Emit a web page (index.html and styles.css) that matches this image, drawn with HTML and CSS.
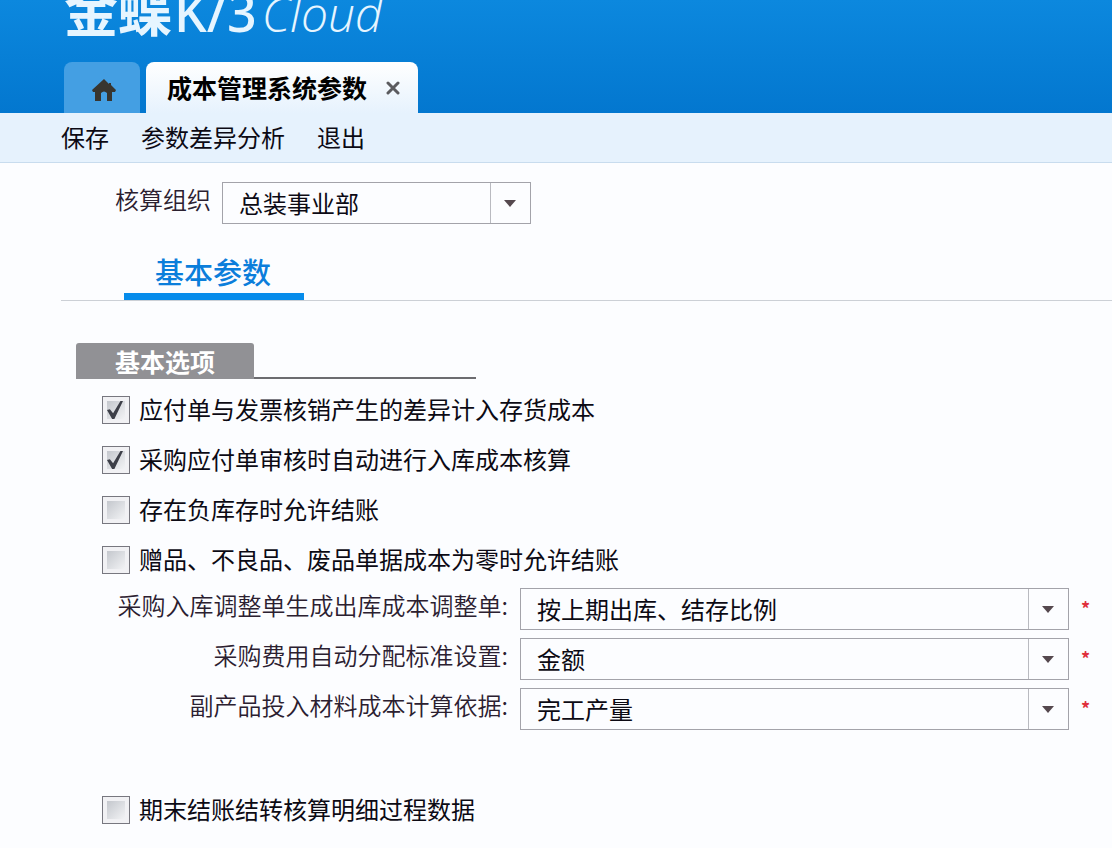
FILE: index.html
```html
<!DOCTYPE html>
<html lang="zh-CN">

<head>
  <meta charset="utf-8">
  <title>成本管理系统参数</title>
  <link rel="stylesheet" href="styles.css">
</head>

<body>
  <header class="header">
    <div class="logo">
      <span class="logo-cn">金蝶</span>
      <span class="logo-k3">K/3</span>
      <span class="logo-cloud">Cloud</span>
    </div>
    <nav class="tabs">
      <a class="tab-home" href="#" aria-label="首页">
        <svg width="24" height="24" viewBox="0 0 24 24">
          <path d="M12 1 L0 12 L1 14 H3 V23 H9 V15 Q12 12 15 15 V23 H20 V14 H23 L24 12 L19 7 V5 H17 V6 Z" fill="#38352f"/>
        </svg>
      </a>
      <div class="tab-active">
        <span>成本管理系统参数</span>
        <button class="close" type="button" aria-label="关闭">
          <svg width="14" height="14" viewBox="0 0 14 14">
            <path d="M2 2 L12 12 M12 2 L2 12" stroke="#5b5b5f" stroke-width="3" stroke-linecap="round"/>
          </svg>
        </button>
      </div>
    </nav>
  </header>

  <div class="toolbar">
    <button type="button">保存</button>
    <button type="button">参数差异分析</button>
    <button type="button">退出</button>
  </div>

  <main>
    <div class="org">
      <label for="org">核算组织</label>
      <div class="select">
        <select id="org">
          <option>总装事业部</option>
        </select>
      </div>
    </div>

    <div class="subtabs">
      <a class="subtab" href="#">基本参数</a>
    </div>

    <!-- Basic options -->
    <div class="section">
      <h2>基本选项</h2>
    </div>

    <form class="options">
      <label class="check"><input type="checkbox" checked><span>应付单与发票核销产生的差异计入存货成本</span></label>
      <label class="check"><input type="checkbox" checked><span>采购应付单审核时自动进行入库成本核算</span></label>
      <label class="check"><input type="checkbox"><span>存在负库存时允许结账</span></label>
      <label class="check"><input type="checkbox"><span>赠品、不良品、废品单据成本为零时允许结账</span></label>

      <div class="field">
        <label for="adjust">采购入库调整单生成出库成本调整单:</label>
        <div class="select">
          <select id="adjust">
            <option>按上期出库、结存比例</option>
          </select>
        </div>
        <span class="required">*</span>
      </div>
      <div class="field">
        <label for="expense">采购费用自动分配标准设置:</label>
        <div class="select">
          <select id="expense">
            <option>金额</option>
          </select>
        </div>
        <span class="required">*</span>
      </div>
      <div class="field">
        <label for="byproduct">副产品投入材料成本计算依据:</label>
        <div class="select">
          <select id="byproduct">
            <option>完工产量</option>
          </select>
        </div>
        <span class="required">*</span>
      </div>

      <label class="check check-last"><input type="checkbox"><span>期末结账结转核算明细过程数据</span></label>
    </form>
  </main>
</body>

</html>
```
FILE: styles.css
```css
* {
  box-sizing: border-box;
}

body {
  margin: 0;
  background-color: #fcfdff;
  color: #0c0a14;
  font-family: "Noto Sans CJK SC", sans-serif;
  font-size: 24px;
  line-height: 34px;
}

button, select {
  font: inherit;
  color: inherit;
  border: 0;
  background: none;
}

.header {
  display: flex;
  flex-direction: column;
  justify-content: flex-end;
  height: 113px;
  overflow: hidden;
  padding-left: 64px;
  background: linear-gradient(#0c88de, #0377cf);
}

/* Logo */
.logo {
  display: flex;
  align-items: baseline;
  margin-bottom: 16px;
  color: #e6f5ff;
  font-size: 48px;
  line-height: 64px;
}

.logo-cn {
  font-size: 54px;
  font-weight: 700;
}

.logo-k3 {
  margin-left: 2px;
  font-family: "Noto Sans", sans-serif;
  font-size: 52px;
  font-weight: 500;
}

.logo-cloud {
  margin-left: 5px;
  font-family: "Open Sans", sans-serif;
  font-style: italic;
  font-weight: 300;
}

/* Page tabs */
.tabs {
  display: flex;
  gap: 6px;
}

.tab-home {
  display: flex;
  align-items: center;
  justify-content: center;
  width: 76px;
  height: 51px;
  padding: 4px 0 0 4px;
  border-radius: 8px 8px 0 0;
  background-color: #449fe3;
}

.tab-active {
  display: flex;
  align-items: center;
  gap: 17px;
  height: 51px;
  padding: 0 16px 0 21px;
  border-radius: 8px 8px 0 0;
  background: linear-gradient(#fff, #e6f2fd);
  color: #000;
  font-size: 25px;
  font-weight: 700;
}

.tab-active span {
  padding-bottom: 2px;
}

.close {
  display: flex;
  padding: 2px;
}

/* Toolbar */
.toolbar {
  display: flex;
  align-items: center;
  gap: 32px;
  height: 50px;
  padding-left: 61px;
  border-bottom: 1px solid #c8dcee;
  background-color: #e6f2fd;
}

.toolbar button {
  padding: 0 0 2px;
}

/* Drop-downs */
.select {
  position: relative;
  height: 42px;
  border: 1px solid #a3a3aa;
}

.select select {
  width: 100%;
  height: 40px;
  padding: 0 48px 0 16px;
  appearance: none;
}

.select::before {
  content: "";
  position: absolute;
  top: 0;
  right: 39px;
  height: 40px;
  border-left: 1px solid #b9bac0;
}

.select::after {
  content: "";
  position: absolute;
  top: 17px;
  right: 14px;
  border: 6px solid transparent;
  border-top: 7px solid #55484e;
  border-bottom: 0;
}

.org {
  display: flex;
  gap: 11px;
  padding: 19px 0 0 115px;
}

.org label, .field label {
  color: #2b2030;
  font-weight: 350;
}

.org .select {
  width: 309px;
}

.subtabs {
  display: flex;
  margin: 24px 0 0 61px;
  padding-left: 63px;
  border-bottom: 1px solid #ccd0d6;
}

.subtab {
  width: 180px;
  height: 52px;
  padding: 6px 2px 0 0;
  border-bottom: 7px solid #068ceb;
  color: #0b7edb;
  font-size: 29px;
  font-weight: 500;
  text-align: center;
  text-decoration: none;
}

.section {
  display: flex;
  width: 400px;
  margin: 42px 0 0 76px;
  border-bottom: 2px solid #6c6c70;
}

.section h2 {
  width: 178px;
  height: 36px;
  margin: 0 0 -2px;
  padding-top: 1px;
  border-radius: 3px 3px 0 0;
  background-color: #919195;
  color: #fff;
  font-size: 25px;
  font-weight: 700;
  text-align: center;
}

/* Options */
.options {
  display: flex;
  flex-direction: column;
  padding: 6px 20px 12px 102px;
}

.check {
  display: flex;
  align-items: center;
  gap: 9px;
  height: 50px;
}

.check span {
  padding-bottom: 2px;
}

.check input {
  width: 28px;
  height: 28px;
  margin: 0;
  appearance: none;
  border: 1px solid #77777f;
  background: linear-gradient(135deg, #c4c7cd, #f2f3f5) content-box, #f1f1f4;
  padding: 4px;
}

.check input:checked::before {
  content: "";
  display: block;
  width: 16px;
  height: 18px;
  background-color: #3d3f48;
  clip-path: polygon(0 50%, 18% 46%, 38% 68%, 84% 0, 100% 0, 46% 100%, 32% 100%);
}

.field {
  display: flex;
  gap: 12px;
  height: 50px;
  padding-top: 3px;
}

.field label {
  width: 406px;
  text-align: right;
}

.field .select {
  flex: 1;
}

.required {
  width: 11px;
  padding-top: 3px;
  color: #e0303c;
  font-size: 18px;
  font-weight: 700;
}

.check-last {
  margin-top: 50px;
}
```
